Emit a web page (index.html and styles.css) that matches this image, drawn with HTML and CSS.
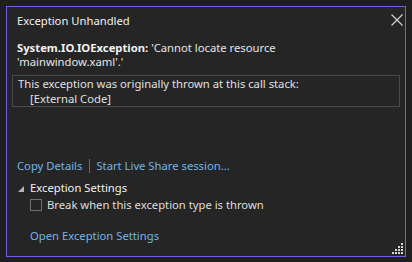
FILE: index.html
```html
<!DOCTYPE html>
<html lang="en">
<head>
<meta charset="utf-8">
<title>Exception Unhandled</title>
<link rel="stylesheet" href="styles.css">
</head>
<body>
<div class="dialog">
  <div class="header">
    <span class="title">Exception Unhandled</span>
    <button class="close" aria-label="Close">
      <svg width="12" height="12" viewBox="0 0 12 12"><path d="M0.5 0.5 L11.5 11.5 M11.5 0.5 L0.5 11.5" stroke="#d6d6d6" stroke-width="1.1" fill="none"/></svg>
    </button>
  </div>
  <div class="message"><b>System.IO.IOException:</b> 'Cannot locate resource<br>'mainwindow.xaml'.'</div>
  <div class="stack">
    <div>This exception was originally thrown at this call stack:</div>
    <div class="frame">[External Code]</div>
  </div>
  <div class="links">
    <a class="link" href="#">Copy Details</a>
    <span class="sep"></span>
    <a class="link" href="#">Start Live Share session...</a>
  </div>
  <div class="settings-head">
    <svg class="tri" width="6" height="6" viewBox="0 0 6 6"><polygon points="0,6 6,0 6,6" fill="#b4b4b4"/></svg>
    <span>Exception Settings</span>
  </div>
  <label class="check"><span class="box"></span><span>Break when this exception type is thrown</span></label>
  <a class="link open" href="#">Open Exception Settings</a>
  <svg class="grip" width="11" height="11" viewBox="0 0 11 11" fill="#d4d4d4">
    <rect x="9" y="0" width="2" height="2"/>
    <rect x="6" y="3" width="2" height="2"/><rect x="9" y="3" width="2" height="2"/>
    <rect x="3" y="6" width="2" height="2"/><rect x="6" y="6" width="2" height="2"/><rect x="9" y="6" width="2" height="2"/>
    <rect x="0" y="9" width="2" height="2"/><rect x="3" y="9" width="2" height="2"/><rect x="6" y="9" width="2" height="2"/><rect x="9" y="9" width="2" height="2"/>
  </svg>
</div>
</body>
</html>
```

FILE: styles.css
```css
html, body {
  margin: 0;
  padding: 0;
  background: #1f1f1f;
}
body {
  width: 412px;
  height: 262px;
  overflow: hidden;
  font-family: "Segoe UI", "Noto Sans", "Open Sans", sans-serif;
  font-size: 11.25px;
  color: #dedede;
}
.dialog {
  position: relative;
  box-sizing: border-box;
  margin: 6px 0 0 6px;
  width: 400px;
  height: 251px;
  border: 1px solid #7161e6;
  background: #252526;
  padding: 0 5px;
  display: flex;
  flex-direction: column;
}
.header {
  display: flex;
  justify-content: space-between;
  align-items: flex-start;
  padding: 6px 0 0 5px;
  margin-right: -3px;
  line-height: 16px;
}
.title {
  color: #f1f1f1;
}
.close {
  margin: 1px 0 0 0;
  padding: 0;
  border: 0;
  background: none;
  width: 12px;
  height: 12px;
  display: block;
}
.close svg { display: block; }
.message {
  margin-top: 12px;
  padding-left: 5px;
  line-height: 14px;
  color: #e6e6e6;
}
.message b {
  font-weight: 700;
  color: #f1f1f1;
}
.stack {
  margin-top: 6px;
  border: 1px solid #4a4a4a;
  padding: 0 5px;
  line-height: 15px;
  color: #e0e0e0;
}
.frame {
  padding-left: 12px;
}
.links {
  margin-top: 51px;
  padding-left: 5px;
  display: flex;
  align-items: center;
  line-height: 16px;
}
.link {
  color: #71b5e8;
  text-decoration: none;
}
.sep {
  width: 1px;
  height: 14px;
  background: #6a6a6a;
  margin: 0 6px 0 7px;
}
.settings-head {
  margin-top: 6px;
  padding-left: 5px;
  display: flex;
  align-items: center;
  line-height: 16px;
  color: #f1f1f1;
}
.tri {
  display: block;
  margin: 1px 6px 0 1px;
}
.check {
  margin-top: 1px;
  padding-left: 18px;
  display: flex;
  align-items: center;
  line-height: 16px;
}
.box {
  box-sizing: border-box;
  width: 12px;
  height: 12px;
  border: 1px solid #6e6e6e;
  margin-right: 5px;
}
.open {
  margin-top: 15px;
  padding-left: 18px;
  line-height: 16px;
  align-self: flex-start;
}
.grip {
  position: absolute;
  right: 2px;
  bottom: 2px;
  display: block;
}
```
